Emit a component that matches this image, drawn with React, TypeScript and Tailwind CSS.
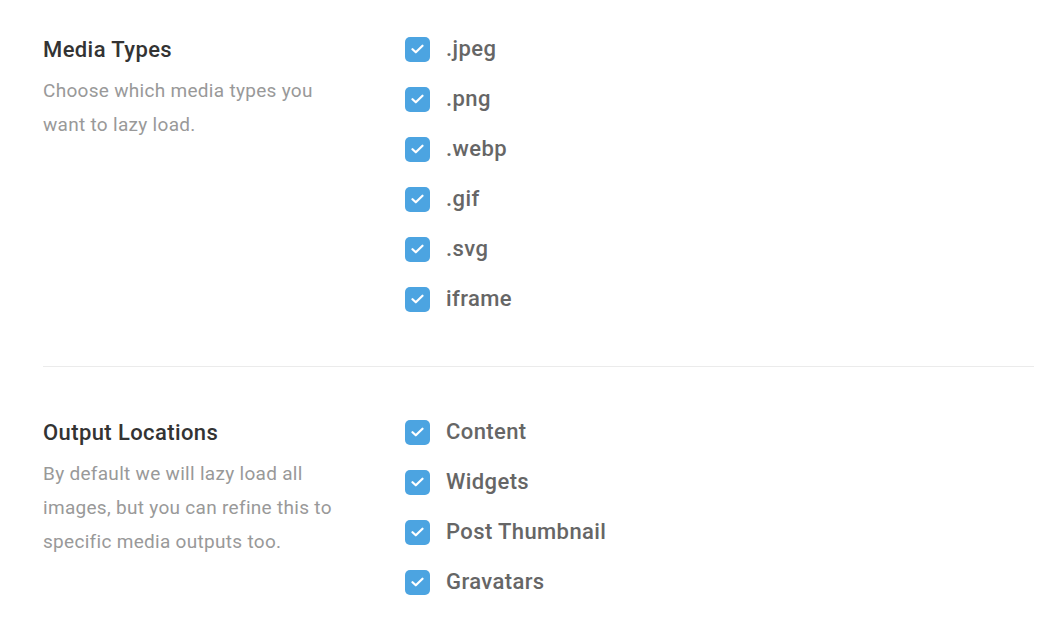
const mediaTypes = [".jpeg", ".png", ".webp", ".gif", ".svg", "iframe"];
const outputLocations = ["Content", "Widgets", "Post Thumbnail", "Gravatars"];

function CheckRow({ label }: { label: string }) {
  return (
    <label className="flex items-center h-[50px] gap-4 cursor-pointer">
      <span className="w-[25px] h-[25px] rounded-[5px] bg-[#4ca4e1] flex items-center justify-center">
        <svg width="13" height="10" viewBox="0 0 13 10" fill="none">
          <path d="M1.5 5.2 L4.8 8.3 L11.5 1.7" stroke="white" strokeWidth="2.2" strokeLinecap="round" strokeLinejoin="round" />
        </svg>
      </span>
      <span className="text-[22px] tracking-[0.4px] font-medium text-[#666666] leading-none">{label}</span>
    </label>
  );
}

function Section({ title, lines, options }: { title: string; lines: string[]; options: string[] }) {
  return (
    <div className="flex">
      <div className="w-[362px] shrink-0">
        <h3 className="h-[50px] flex items-center text-[22px] tracking-[0.4px] font-medium text-[#333333]">{title}</h3>
        <p className="text-[19px] tracking-[0.3px] leading-[34px] text-[#999999]">
          {lines.map((l, i) => (
            <span key={i} className="block">{l}</span>
          ))}
        </p>
      </div>
      <div className="flex flex-col">
        {options.map((o) => (
          <CheckRow key={o} label={o} />
        ))}
      </div>
    </div>
  );
}

export default function App() {
  return (
    <div className="w-[1050px] h-[630px] overflow-hidden bg-white pl-[43px] pr-[16px] pt-[24px] font-['Roboto',sans-serif]">
      <div className="pb-[42px] border-b border-[#ebebeb]">
        <Section
          title="Media Types"
          lines={["Choose which media types you", "want to lazy load."]}
          options={mediaTypes}
        />
      </div>
      <div className="pt-[40px]">
        <Section
          title="Output Locations"
          lines={["By default we will lazy load all", "images, but you can refine this to", "specific media outputs too."]}
          options={outputLocations}
        />
      </div>
    </div>
  );
}
